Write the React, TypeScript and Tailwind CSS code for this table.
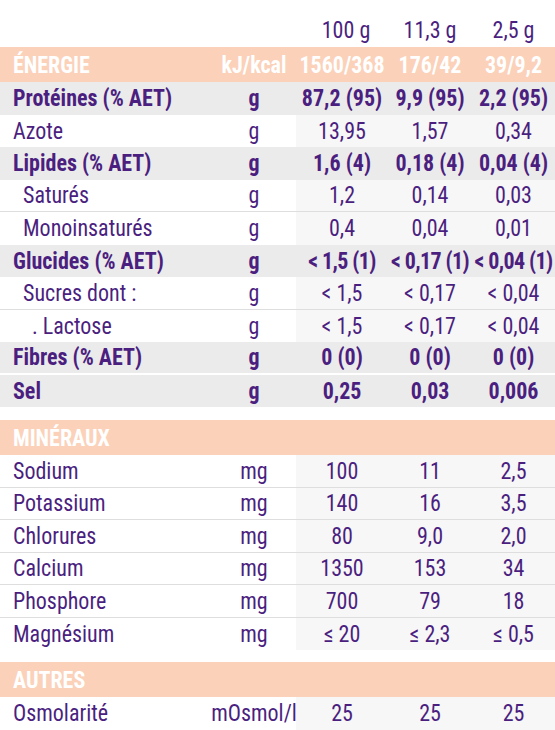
import React from "react";

type Kind = "bold" | "normal";
type Row = {
  label: string;
  unit: string;
  v: [string, string, string];
  kind: Kind;
  indent?: 0 | 1 | 2;
  line?: "gray" | "white" | "none";
  tight?: boolean;
};

const nutrition: Row[] = [
  { label: "Protéines (% AET)", unit: "g", v: ["87,2 (95)", "9,9 (95)", "2,2 (95)"], kind: "bold" },
  { label: "Azote", unit: "g", v: ["13,95", "1,57", "0,34"], kind: "normal" },
  { label: "Lipides (% AET)", unit: "g", v: ["1,6 (4)", "0,18 (4)", "0,04 (4)"], kind: "bold" },
  { label: "Saturés", unit: "g", v: ["1,2", "0,14", "0,03"], kind: "normal", indent: 1, line: "gray" },
  { label: "Monoinsaturés", unit: "g", v: ["0,4", "0,04", "0,01"], kind: "normal", indent: 1 },
  { label: "Glucides (% AET)", unit: "g", v: ["< 1,5 (1)", "< 0,17 (1)", "< 0,04 (1)"], kind: "bold", tight: true },
  { label: "Sucres dont :", unit: "g", v: ["< 1,5", "< 0,17", "< 0,04"], kind: "normal", indent: 1, line: "gray" },
  { label: ". Lactose", unit: "g", v: ["< 1,5", "< 0,17", "< 0,04"], kind: "normal", indent: 2 },
  { label: "Fibres (% AET)", unit: "g", v: ["0 (0)", "0 (0)", "0 (0)"], kind: "bold", line: "white" },
  { label: "Sel", unit: "g", v: ["0,25", "0,03", "0,006"], kind: "bold" },
];

const minerals: Row[] = [
  { label: "Sodium", unit: "mg", v: ["100", "11", "2,5"], kind: "normal", line: "gray" },
  { label: "Potassium", unit: "mg", v: ["140", "16", "3,5"], kind: "normal", line: "gray" },
  { label: "Chlorures", unit: "mg", v: ["80", "9,0", "2,0"], kind: "normal", line: "gray" },
  { label: "Calcium", unit: "mg", v: ["1350", "153", "34"], kind: "normal", line: "gray" },
  { label: "Phosphore", unit: "mg", v: ["700", "79", "18"], kind: "normal", line: "gray" },
  { label: "Magnésium", unit: "mg", v: ["≤ 20", "≤ 2,3", "≤ 0,5"], kind: "normal" },
];

const others: Row[] = [
  { label: "Osmolarité", unit: "mOsmol/l", v: ["25", "25", "25"], kind: "normal" },
];

function Tx({ children, tight }: { children: React.ReactNode; tight?: boolean }) {
  return (
    <span className={`inline-block scale-y-[1.08] whitespace-nowrap ${tight ? "tracking-[-0.6px]" : ""}`}>
      {children}
    </span>
  );
}

function DataRow({ r }: { r: Row }) {
  const bold = r.kind === "bold";
  const lineCls =
    r.line === "gray"
      ? "border-b border-[#dedede]"
      : r.line === "white"
      ? "border-b-2 border-white"
      : "";
  const indentCls = r.indent === 1 ? "pl-[23px]" : r.indent === 2 ? "pl-[32px]" : "pl-[13px]";
  return (
    <div
      className={`flex h-[32.5px] box-border ${lineCls} ${
        bold ? "bg-[#ebebeb] font-bold" : "bg-white font-normal"
      }`}
    >
      <div className={`w-[212px] flex items-center ${indentCls}`}>
        <Tx>{r.label}</Tx>
      </div>
      <div className="w-[84px] flex items-center justify-center">
        <Tx>{r.unit}</Tx>
      </div>
      <div className={`flex-1 flex ${bold ? "" : "bg-[#f7f7f7]"}`}>
        <div className="w-[92px] flex items-center justify-center">
          <Tx tight={r.tight}>{r.v[0]}</Tx>
        </div>
        <div className="w-[84px] flex items-center justify-center">
          <Tx tight={r.tight}>{r.v[1]}</Tx>
        </div>
        <div className="flex-1 flex items-center justify-center">
          <Tx tight={r.tight}>{r.v[2]}</Tx>
        </div>
      </div>
    </div>
  );
}

function Band({
  label,
  unit,
  v,
}: {
  label: string;
  unit?: string;
  v?: [string, string, string];
}) {
  return (
    <div className="flex h-[35px] bg-[#fbd1b9] text-white font-bold">
      <div className="w-[212px] flex items-center pl-[13px]">
        <Tx>{label}</Tx>
      </div>
      <div className="w-[84px] flex items-center justify-center">{unit && <Tx>{unit}</Tx>}</div>
      {v && (
        <div className="flex-1 flex">
          <div className="w-[92px] flex items-center justify-center">
            <Tx>{v[0]}</Tx>
          </div>
          <div className="w-[84px] flex items-center justify-center">
            <Tx>{v[1]}</Tx>
          </div>
          <div className="flex-1 flex items-center justify-center">
            <Tx>{v[2]}</Tx>
          </div>
        </div>
      )}
    </div>
  );
}

export default function App() {
  return (
    <div className="w-[555px] h-[730px] overflow-hidden bg-white text-[#4b1f80] text-[22px] leading-none font-['Roboto_Condensed','Roboto',sans-serif] font-stretch-condensed">
      <div className="flex h-[47px]">
        <div className="w-[212px]" />
        <div className="w-[84px]" />
        <div className="flex-1 flex">
          <div className="w-[92px] flex items-center justify-center pt-[12px] pl-[8px]">
            <Tx>100 g</Tx>
          </div>
          <div className="w-[84px] flex items-center justify-center pt-[12px]">
            <Tx>11,3 g</Tx>
          </div>
          <div className="flex-1 flex items-center justify-center pt-[12px]">
            <Tx>2,5 g</Tx>
          </div>
        </div>
      </div>
      <Band label="ÉNERGIE" unit="kJ/kcal" v={["1560/368", "176/42", "39/9,2"]} />
      {nutrition.map((r) => (
        <DataRow key={r.label} r={r} />
      ))}
      <div className="h-[13px]" />
      <Band label="MINÉRAUX" />
      {minerals.map((r) => (
        <DataRow key={r.label} r={r} />
      ))}
      <div className="h-[12px]" />
      <Band label="AUTRES" />
      {others.map((r) => (
        <DataRow key={r.label} r={r} />
      ))}
    </div>
  );
}
